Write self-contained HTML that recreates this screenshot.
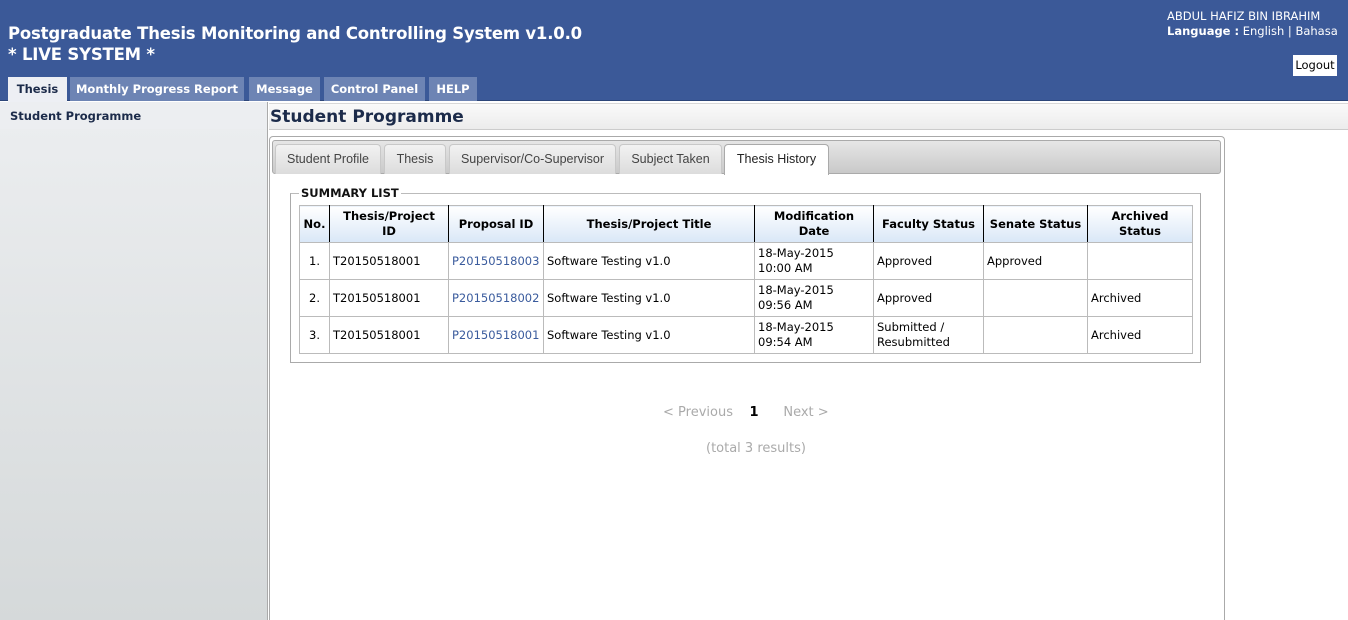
<!DOCTYPE html>
<html><head><meta charset="utf-8"><style>
*{margin:0;padding:0;box-sizing:border-box}
html,body{width:1348px;height:620px;overflow:hidden}
body{background:#fff;font-family:"DejaVu Sans","Liberation Sans",sans-serif;font-size:12px;color:#000;position:relative}
.a{position:absolute}
#hdr{left:0;top:0;width:1348px;height:101px;background:#3b5998;border-bottom:1px solid #2d4679}
.title{left:8px;top:23px;color:#fff;font-weight:bold;font-size:16.5px;line-height:21px;letter-spacing:-0.2px}
.user{left:1167px;top:9px;color:#fff;font-size:11.5px;line-height:15px;white-space:nowrap}
.logout{left:1293px;top:55px;width:44px;height:21px;background:#fff;font-size:11.5px;line-height:21px;text-align:center;color:#000}
.mt{top:77px;height:24px;background:#6d84b4;color:#fff;font-weight:bold;font-size:11.5px;line-height:25px;text-align:center}
#side{left:0;top:102px;width:268px;height:518px;background:linear-gradient(#eceef0,#d5d9da);border-right:1px solid #aaa}
.sidet{left:0;top:102px;width:267px;height:27px;background:#eceef1;font-weight:bold;font-size:11.5px;line-height:28px;padding-left:10px;color:#1c2b4a}
.hbar{left:269px;top:103px;width:1079px;height:27px;background:linear-gradient(#fafafa,#ececec);border-top:1px solid #d8d8d8;border-bottom:1px solid #ccc;font-weight:bold;font-size:17px;line-height:26px;padding-left:1px;color:#1c2b4a}
.panel{left:269px;top:136px;width:956px;height:484px;border:1px solid #aaa;border-bottom:none;border-radius:4px 4px 0 0}
.strip{left:272px;top:140px;width:949px;height:34px;background:linear-gradient(#e6e6e6,#c9c9c9);border:1px solid #aaa;border-radius:3px}
.tab{top:144px;height:30px;background:linear-gradient(#f2f2f2,#dcdcdc);border:1px solid #c8c8c8;border-bottom:none;border-radius:4px 4px 0 0;font-family:"Liberation Sans",sans-serif;font-size:12.5px;color:#444;text-align:center;line-height:28px}
.tab.on{background:#fff;color:#222;border-color:#aaa;height:31px}
fieldset{position:absolute;left:290px;top:187px;width:911px;height:176px;border:1px solid #aaa;border-top-color:#bbb}
legend{font-weight:bold;font-size:11.5px;margin-left:8px;padding:0 2px;color:#111;line-height:12px}
table{position:absolute;left:299px;top:205px;border-collapse:collapse;font-size:11.5px;table-layout:fixed}
td,th{border:1px solid #bbb;padding:0 3px;height:37px;vertical-align:middle;line-height:15px;white-space:nowrap}
th{background:linear-gradient(#fff,#d9e7f7);font-weight:bold;text-align:center;border-left:1px solid #000;border-right:1px solid #000;border-top-color:#bbb;font-size:11.5px}
th:first-child{border-left-color:#bbb}th:last-child{border-right-color:#bbb}
a{color:#3a5b9d;text-decoration:none}
.pg{top:405px;left:663px;color:#aaa;font-size:13px;white-space:pre}
.tot{top:441px;left:706px;color:#aaa;font-size:13px}
</style></head><body>
<div id="hdr" class="a"></div>
<div class="a title">Postgraduate Thesis Monitoring and Controlling System v1.0.0<br>* LIVE SYSTEM *</div>
<div class="a user">ABDUL HAFIZ BIN IBRAHIM<br><b>Language :</b> English | Bahasa</div>
<div class="a logout">Logout</div>
<div class="a mt" style="left:8px;width:59px;background:#edeff4;color:#1c2b4a;height:25px">Thesis</div>
<div class="a mt" style="left:70px;width:174px">Monthly Progress Report</div>
<div class="a mt" style="left:249px;width:71px">Message</div>
<div class="a mt" style="left:324px;width:101px">Control Panel</div>
<div class="a mt" style="left:429px;width:48px">HELP</div>
<div id="side" class="a"></div>
<div class="a sidet">Student Programme</div>
<div class="a hbar">Student Programme</div>
<div class="a panel"></div>
<div class="a strip"></div>
<div class="a tab" style="left:275px;width:106px">Student Profile</div>
<div class="a tab" style="left:384px;width:62px">Thesis</div>
<div class="a tab" style="left:449px;width:167px">Supervisor/Co-Supervisor</div>
<div class="a tab" style="left:619px;width:103px">Subject Taken</div>
<div class="a tab on" style="left:724px;width:105px">Thesis History</div>
<fieldset><legend>SUMMARY LIST</legend></fieldset>
<table>
<colgroup><col style="width:30px"><col style="width:119px"><col style="width:95px"><col style="width:211px"><col style="width:119px"><col style="width:110px"><col style="width:104px"><col style="width:105px"></colgroup>
<tr><th>No.</th><th>Thesis/Project<br>ID</th><th>Proposal ID</th><th>Thesis/Project Title</th><th>Modification<br>Date</th><th>Faculty Status</th><th>Senate Status</th><th>Archived<br>Status</th></tr>
<tr><td style="text-align:center">1.</td><td>T20150518001</td><td><a>P20150518003</a></td><td>Software Testing v1.0</td><td>18-May-2015<br>10:00 AM</td><td>Approved</td><td>Approved</td><td></td></tr>
<tr><td style="text-align:center">2.</td><td>T20150518001</td><td><a>P20150518002</a></td><td>Software Testing v1.0</td><td>18-May-2015<br>09:56 AM</td><td>Approved</td><td></td><td>Archived</td></tr>
<tr><td style="text-align:center">3.</td><td>T20150518001</td><td><a>P20150518001</a></td><td>Software Testing v1.0</td><td>18-May-2015<br>09:54 AM</td><td>Submitted /<br>Resubmitted</td><td></td><td>Archived</td></tr>
</table>
<div class="a pg">&lt; Previous    <b style="color:#000">1</b>      Next &gt;</div>
<div class="a tot">(total 3 results)</div>
</body></html>
